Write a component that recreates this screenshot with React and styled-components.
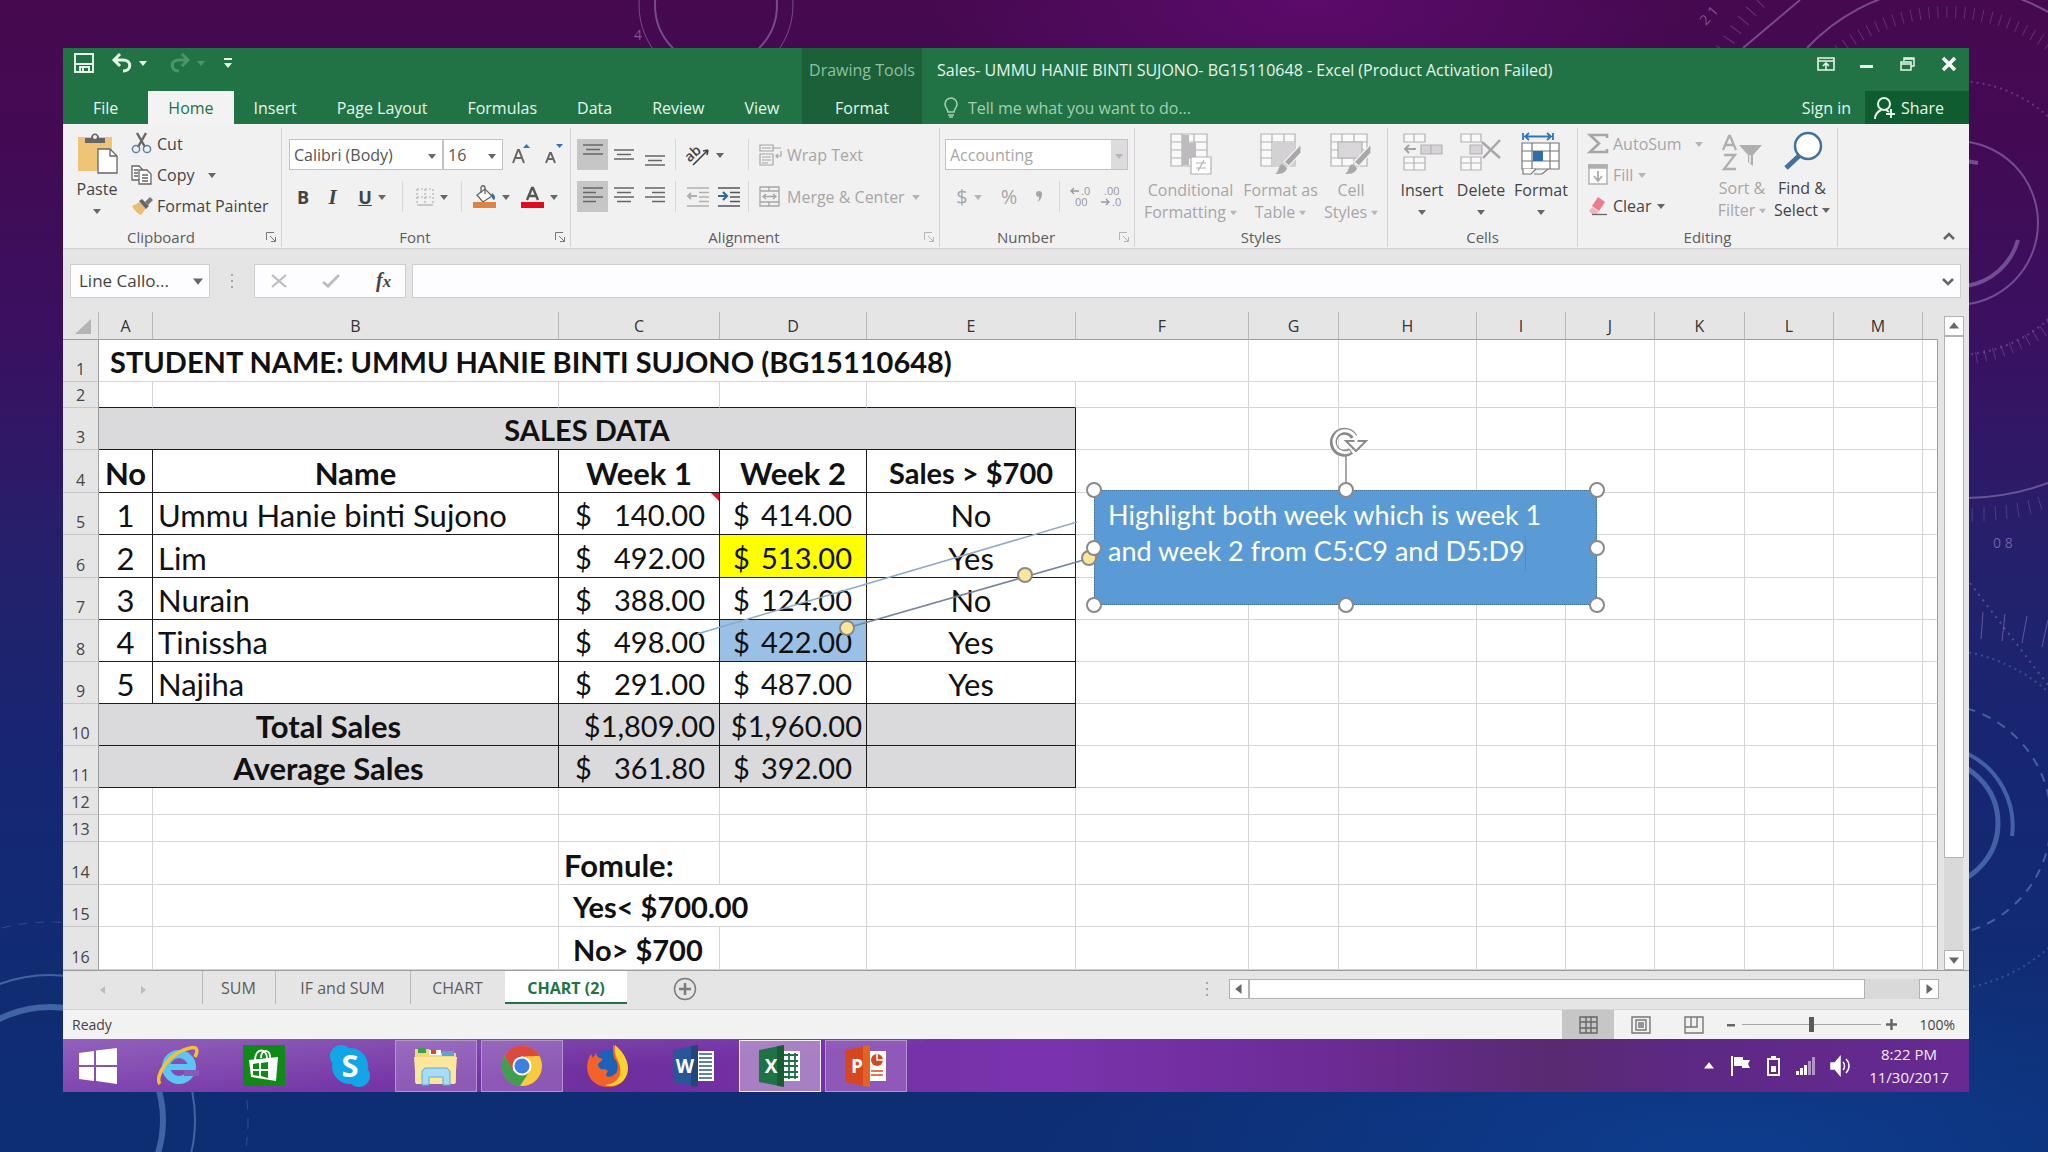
import React from "react";
import styled, { createGlobalStyle, css } from "styled-components";

const GlobalStyle = createGlobalStyle`
  * {
    box-sizing: border-box;
  }
  body {
    margin: 0;
    background: #123075;
  }
  button, input, select {
    font: inherit;
    color: inherit;
  }
  svg {
    display: block;
    flex: none;
    overflow: visible;
  }
`;

const Slide = styled.div`
  position: relative;
  min-height: 100vh;
  padding: 48px 79px 60px 63px;
  overflow: hidden;
  font-family: "Open Sans", "Noto Sans", sans-serif;
  font-size: 16px;
  line-height: 22px;
  color: #444;
  background:
    radial-gradient(ellipse 380px 160px at 64% 0%, rgba(110, 12, 130, 0.55), transparent),
    radial-gradient(ellipse 700px 220px at 84% 100%, rgba(14, 70, 160, 0.6), transparent),
    linear-gradient(#46094f, #430a54 12%, #391161 30%, #25206b 48%, #172672 65%, #102c72 85%, #0d2e72);
`;

const Backdrop = styled.svg`
  position: absolute;
  inset: 0;
  width: 100%;
  height: 100%;
`;

const Window = styled.main`
  position: relative;
  display: flex;
  flex-direction: column;
`;

/* ---------- title bar and tabs ---------- */

const TitleBar = styled.header`
  display: flex;
  height: 76px;
  background: #217346;
  color: #e6f6ea;
`;

const TitleLeft = styled.div`
  display: flex;
  flex-direction: column;
  justify-content: space-between;
  width: 739px;
`;

const QuickAccess = styled.div`
  display: flex;
  align-items: center;
  gap: 8px;
  height: 30px;
  padding-left: 9px;
`;

const IconButton = styled.button`
  display: flex;
  align-items: center;
  justify-content: center;
  gap: 6px;
  width: ${(p) => p.$w || 31}px;
  height: ${(p) => p.$h || 31}px;
  padding: 0;
  border: 0;
  background: ${(p) => (p.$on ? "#c6c6c6" : "transparent")};
  color: ${(p) => (p.$dim ? "#a6a6a6" : "inherit")};
  font-size: ${(p) => p.$size || 16}px;
`;

const Tabs = styled.nav`
  display: flex;
`;

const Tab = styled.button`
  height: 33px;
  padding: 0 ${(p) => p.$pad || 20}px;
  border: 0;
  background: ${(p) => (p.$active ? "#f3f3f3" : "transparent")};
  color: ${(p) => (p.$active ? "#217346" : "#e6f6ea")};
  white-space: nowrap;
`;

const ContextTab = styled.div`
  display: flex;
  flex-direction: column;
  justify-content: space-between;
  align-items: center;
  width: 120px;
  padding-top: 11px;
  background: #1c6039;
  color: #8fc0a0;
  white-space: nowrap;
`;

const TitleRight = styled.div`
  flex: 1;
  display: flex;
  flex-direction: column;
  justify-content: space-between;
`;

const TitleRow = styled.div`
  display: flex;
  justify-content: space-between;
  align-items: ${(p) => (p.$top ? "flex-start" : "center")};
  padding-left: ${(p) => p.$left || 15}px;
`;

const DocTitle = styled.h1`
  margin: 11px 0 0;
  font-size: 16px;
  font-weight: 400;
  line-height: 22px;
`;

const WindowButtons = styled.div`
  display: flex;
  gap: 10px;
  padding-right: 5px;
`;

const TellMe = styled.label`
  display: flex;
  align-items: center;
  gap: 10px;
  color: #a3cfb0;
  input {
    width: 300px;
    padding: 0;
    border: 0;
    background: none;
  }
  input::placeholder {
    color: #a3cfb0;
    opacity: 1;
  }
`;

const Account = styled.div`
  display: flex;
  align-items: center;
`;

const SignIn = styled.a`
  padding: 0 14px;
  color: #e6f6ea;
  text-decoration: none;
`;

const Share = styled.button`
  display: flex;
  align-items: center;
  gap: 5px;
  width: 104px;
  height: 33px;
  padding: 0 9px;
  border: 0;
  background: #0e5c2f;
`;

/* ---------- ribbon ---------- */

const Ribbon = styled.section`
  display: flex;
  height: 125px;
  padding: 4px 0 1px;
  background: #f2f1f2;
  border-bottom: 1px solid #d2d0d2;
`;

const GroupBox = styled.section`
  display: flex;
  flex-direction: column;
  justify-content: space-between;
  width: ${(p) => p.$w}px;
  border-right: 1px solid #d4d2d4;
`;

const GroupBody = styled.div`
  display: flex;
  padding-left: ${(p) => p.$left || 0}px;
`;

const GroupFoot = styled.footer`
  display: flex;
  align-items: center;
  justify-content: center;
  height: 20px;
  padding: 0 5px;
  font-size: 15px;
  color: #5c5c5c;
  span {
    flex: 1;
    text-align: center;
    padding-right: ${(p) => (p.$launcher ? 12 : 0)}px;
  }
`;

const Rows = styled.div`
  display: flex;
  flex-direction: column;
  gap: ${(p) => p.$gap || 0}px;
  padding-top: ${(p) => p.$top || 0}px;
  padding-left: ${(p) => p.$left || 0}px;
`;

const Row = styled.div`
  display: flex;
  align-items: center;
  height: 31px;
`;

const Separator = styled.i`
  width: 1px;
  height: 31px;
  margin: 0 ${(p) => p.$r || 8}px 0 ${(p) => p.$l || 5}px;
  background: #d8d6d8;
`;

const TextButton = styled.button`
  display: flex;
  align-items: center;
  gap: ${(p) => p.$gap || 5}px;
  height: 31px;
  padding: 0;
  border: 0;
  background: none;
  color: ${(p) => (p.$dim ? "#a6a6a6" : "#444")};
  white-space: nowrap;
`;

const BigButton = styled.button`
  display: flex;
  flex-direction: column;
  align-items: center;
  width: ${(p) => p.$w}px;
  padding: 5px 0 0;
  border: 0;
  background: none;
  color: ${(p) => (p.$dim ? "#a6a6a6" : "#444")};
  line-height: 22px;
  white-space: nowrap;
  svg {
    margin-bottom: 4px;
  }
`;

const ArrowLine = styled.span`
  display: flex;
  align-items: center;
  gap: 4px;
  height: 22px;
  svg {
    margin: 0;
  }
`;

const Combo = styled.div`
  position: relative;
  width: ${(p) => p.$w}px;
  height: 31px;
  select {
    width: 100%;
    height: 100%;
    padding: 0 4px;
    border: 1px solid #c3c1c3;
    border-radius: 0;
    background: #fff;
    appearance: none;
    color: ${(p) => (p.$dim ? "#a6a6a6" : "#555")};
    opacity: 1;
  }
  svg {
    position: absolute;
    right: 7px;
    top: 13px;
    pointer-events: none;
  }
`;

const DimCombo = styled(Combo)`
  select {
    border-right: 17px solid #dddbdd;
    outline: 1px solid #c3c1c3;
    outline-offset: -1px;
  }
  svg {
    right: 5px;
  }
`;

const Letter = styled.span`
  font-size: ${(p) => p.$size || 18}px;
  font-weight: ${(p) => (p.$bold ? 700 : 400)};
  font-style: ${(p) => (p.$italic ? "italic" : "normal")};
  font-family: ${(p) => (p.$serif ? '"Liberation Serif", serif' : "inherit")};
  text-decoration: ${(p) => (p.$underline ? "underline" : "none")};
`;

const CollapseSlot = styled.div`
  flex: 1;
  display: flex;
  align-items: flex-end;
  justify-content: flex-end;
  padding-right: 5px;
`;

/* ---------- formula bar ---------- */

const FormulaBar = styled.section`
  display: flex;
  height: 63px;
  padding: 15px 8px 14px 7px;
  background: #e6e5e6;
`;

const FieldBox = styled.div`
  display: flex;
  align-items: center;
  justify-content: space-between;
  width: ${(p) => (p.$w ? p.$w + "px" : "auto")};
  flex: ${(p) => (p.$w ? "none" : 1)};
  padding: 0 6px 0 8px;
  border: 1px solid #cfcdcf;
  background: #fdfcfe;
  input {
    flex: 1;
    min-width: 0;
    padding: 0;
    border: 0;
    background: none;
    font-size: 17px;
  }
`;

const Dots = styled.span`
  width: ${(p) => p.$w}px;
  display: flex;
  flex-direction: column;
  align-items: center;
  justify-content: center;
  gap: 4px;
  i {
    width: 2px;
    height: 2px;
    background: #a8a6a8;
  }
`;

/* ---------- sheet ---------- */

const SheetArea = styled.section`
  position: relative;
  display: flex;
  background: #e6e5e6;
`;

const Grid = styled.table`
  flex: 1;
  width: 0;
  table-layout: fixed;
  border-collapse: separate;
  border-spacing: 0;
`;

const ColHead = styled.th`
  height: 28px;
  padding: 0;
  border-right: 1px solid #b9b7b9;
  border-bottom: 1px solid #9d9b9d;
  background: #e6e5e6;
  font-weight: 400;
  color: #333;
  &:last-child {
    border-right: 0;
  }
`;

const RowHead = styled.th`
  height: ${(p) => p.$h}px;
  padding: 0 0 1px;
  border-right: 1px solid #9d9b9d;
  border-bottom: 1px solid #c8c6c8;
  background: #e6e5e6;
  font-weight: 400;
  line-height: 22px;
  vertical-align: bottom;
  color: #444;
`;

const boxed = css`
  border-right-color: #1d1b1f;
  border-bottom-color: #1d1b1f;
`;

const Cell = styled.td`
  position: relative;
  padding: 0 ${(p) => p.$padR ?? 5}px 2px ${(p) => p.$padL ?? 5}px;
  border-right: 1px solid #d6d3d9;
  border-bottom: 1px solid #d6d3d9;
  background: ${(p) => p.$fill || "#fff"};
  color: #111;
  font-family: Lato, Carlito, sans-serif;
  font-size: ${(p) => (p.$tight ? 29 : 31)}px;
  font-weight: ${(p) => (p.$bold ? 700 : 400)};
  line-height: 34px;
  text-align: ${(p) => p.$align || "left"};
  vertical-align: bottom;
  white-space: nowrap;
  ${(p) => p.$under && "border-bottom-color: #1d1b1f;"}
  ${(p) => p.$box && boxed}
  &:last-child {
    border-right-color: #9d9b9d;
  }
`;

const Money = styled.span`
  display: flex;
  justify-content: space-between;
`;

const NoteMark = styled.i`
  position: absolute;
  top: 0;
  right: 0;
  border-top: 8px solid #e3122d;
  border-left: 8px solid transparent;
`;

const VScroll = styled.div`
  display: flex;
  flex-direction: column;
  width: 31px;
  padding: 4px 6px 0;
`;

const ScrollButton = styled.button`
  display: flex;
  align-items: center;
  justify-content: center;
  width: 20px;
  height: 20px;
  padding: 0;
  border: 1px solid #b3b1b3;
  background: #fdfdfd;
`;

const VThumb = styled.div`
  height: 522px;
  width: 20px;
  border: 1px solid #b3b1b3;
  background: #fff;
`;

const ScrollTrack = styled.div`
  flex: 1;
  background: #dad9da;
`;

const Shapes = styled.svg`
  position: absolute;
  left: 0;
  top: 0;
  width: 1875px;
  height: 658px;
  pointer-events: none;
`;

const Callout = styled.div`
  position: absolute;
  left: 1031px;
  top: 178px;
  width: 503px;
  height: 115px;
  padding: 6px 13px;
  background: #5b9bd5;
  border: 1px dotted #41719c;
  color: #fff;
  font-family: Lato, Carlito, sans-serif;
  font-size: 27px;
  line-height: 36px;
  white-space: nowrap;
  p {
    margin: 0;
    height: 36px;
  }
`;

const Caret = styled.i`
  display: inline-block;
  width: 1px;
  height: 34px;
  background: #7d7f86;
  vertical-align: middle;
`;

/* ---------- sheet tabs, status bar ---------- */

const SheetBar = styled.nav`
  display: flex;
  height: 39px;
  padding-right: 30px;
  border-top: 1px solid #9d9b9d;
  background: #e6e5e6;
`;

const SheetNav = styled.div`
  display: flex;
  align-items: center;
  gap: 9px;
  width: 139px;
  padding-left: 24px;
`;

const SheetTab = styled.button`
  height: 33px;
  padding: 0;
  width: ${(p) => p.$w}px;
  border: 0;
  background: ${(p) => (p.$active ? "#fff" : "transparent")};
  color: ${(p) => (p.$active ? "#217346" : "#5c5c5c")};
  font-weight: ${(p) => (p.$active ? 700 : 400)};
  box-shadow: ${(p) => (p.$active ? "inset 0 -2px #217346" : "inset 1px 0 #b9b7b9")};
`;

const AddSheet = styled.button`
  display: flex;
  align-items: center;
  justify-content: center;
  width: 116px;
  height: 36px;
  padding: 0;
  border: 0;
  background: none;
`;

const HScroll = styled.div`
  display: flex;
  width: 733px;
  height: 20px;
  margin-top: 8px;
  margin-left: auto;
`;

const HThumb = styled.div`
  flex: 0 0 616px;
  border: 1px solid #b3b1b3;
  background: #fff;
`;

const StatusBar = styled.footer`
  display: flex;
  align-items: center;
  height: 30px;
  padding: 0 14px 0 9px;
  border-top: 1px solid #d2d0d2;
  background: #f2f2f2;
  font-size: 14px;
`;

const StatusText = styled.span`
  flex: 1;
`;

const Zoom = styled.input`
  appearance: none;
  width: 139px;
  height: 20px;
  margin: 0;
  background: linear-gradient(#a5a5a5, #a5a5a5) center / 100% 1px no-repeat;
  &::-webkit-slider-thumb {
    appearance: none;
    width: 5px;
    height: 15px;
    background: #5a5a5a;
  }
`;

const ZoomLabel = styled.output`
  width: 54px;
  text-align: right;
`;

/* ---------- taskbar ---------- */

const Taskbar = styled.footer`
  display: flex;
  align-items: center;
  height: 53px;
  background: linear-gradient(176deg, rgba(190, 160, 215, 0.35), transparent 60%) 0 0 / 860px 100% no-repeat,
    linear-gradient(90deg, #7c3fae, #6f2f9f 30%, #7a33ad 52%, #6c2b96 66%, #592a72 78%, #5e2885 86%, #672a92);
`;

const TaskItem = styled.button`
  display: flex;
  align-items: center;
  justify-content: center;
  width: ${(p) => p.$w || 82}px;
  height: 52px;
  margin-right: 4px;
  padding: 0;
  border: 1px solid ${(p) => (p.$active ? "#f1e9f6" : p.$open ? "#b493cf" : "transparent")};
  background: ${(p) => (p.$active ? "rgba(220, 205, 225, 0.5)" : p.$open ? "rgba(200, 170, 220, 0.32)" : "transparent")};
`;

const Tray = styled.div`
  display: flex;
  align-items: center;
  gap: 14px;
  margin-left: auto;
  padding-right: 17px;
`;

const Clock = styled.time`
  width: 86px;
  color: #f3ecf7;
  font-size: 15px;
  line-height: 23px;
  text-align: center;
`;

/* ---------- small drawings ---------- */

function Arrow({ dim, size = 8, dir = "down", color }) {
  const d = {
    down: "M0 2h8L4 7z",
    up: "M0 6h8L4 1z",
    left: "M6 0v8L1 4z",
    right: "M2 0v8l5-4z",
  }[dir];
  return (
    <svg width={size} height={size} viewBox="0 0 8 8" fill={color || (dim ? "#b5b5b5" : "#666")}>
      <path d={d} />
    </svg>
  );
}

function Launcher({ dim }) {
  return (
    <svg width="10" height="10" viewBox="0 0 10 10" fill="none" stroke={dim ? "#b5b5b5" : "#777"}>
      <path d="M.5 8V.5H8M4 4l5 5M9.500 5v4.500H5" />
    </svg>
  );
}

function Lines({ widths, top = 0, color = "#666" }) {
  return (
    <svg width="20" height="24" viewBox="0 0 20 24" stroke={color} strokeWidth="1.500">
      {widths.map(([x1, x2], i) => (
        <path key={i} d={`M${x1} ${top + i * 4.5}H${x2}`} />
      ))}
    </svg>
  );
}

function Scissors() {
  return (
    <svg width="21" height="21" viewBox="0 0 21 21" fill="none" strokeWidth="2">
      <path d="M6 0l8 14M15 0L7 14" stroke="#666" strokeWidth="2.400" />
      <circle cx="5" cy="16" r="3.600" stroke="#5d7fa3" strokeWidth="1.500" />
      <circle cx="16" cy="16" r="3.600" stroke="#5d7fa3" strokeWidth="1.500" />
    </svg>
  );
}

function CopyIcon() {
  return (
    <svg width="21" height="20" viewBox="0 0 21 20" fill="#fff" stroke="#666" strokeWidth="1.300">
      <path d="M1 1h7l3 3v11H1zM3 5h4M3 8h4M3 11h4" />
      <path d="M8 5h8l4 4v10H8zM11 10h6M11 13h6M11 16h6" />
    </svg>
  );
}

function Brush() {
  return (
    <svg width="22" height="18" viewBox="0 0 22 18">
      <path d="M1 9l8-4 6 6-5 7c-3-1-7-5-9-9z" fill="#efba74" />
      <path d="M8 4l3-2 7 7-3 3z" fill="#666" />
      <path d="M14 5l5-5 3 3-5 5z" fill="#777" />
    </svg>
  );
}

function PasteIcon() {
  return (
    <svg width="42" height="41" viewBox="0 0 42 41">
      <path d="M2 4h34v34H2z" fill="#f0c477" />
      <path d="M9 10V5h6c0-6 8-6 8 0h6v5z" fill="#666" />
      <circle cx="19" cy="4" r="2" fill="#f2f1f2" />
      <path d="M22 16h12l7 7v17H22z" fill="#fff" stroke="#666" strokeWidth="1.300" />
      <path d="M34 16v7h7" fill="none" stroke="#666" strokeWidth="1.300" />
    </svg>
  );
}

function BorderIcon() {
  return (
    <svg width="18" height="18" viewBox="0 0 18 18" fill="none" stroke="#b0b0b0" strokeWidth="1.200">
      <path d="M1 1h16v16M1 1v16M9 1v16M1 9h16" strokeDasharray="2 2" />
      <path d="M1 17h16" />
    </svg>
  );
}

function BucketIcon() {
  return (
    <svg width="23" height="24" viewBox="0 0 23 24">
      <path d="M4 10l8-6 7 7-9 6z" fill="#fff" stroke="#666" strokeWidth="1.300" />
      <path d="M8 8V3c0-3 4-3 4 0v6" fill="none" stroke="#666" strokeWidth="1.300" />
      <path d="M19 8c3 2 4 5 2 7-2-1-3-4-2-7z" fill="#3a6d9a" />
      <path d="M0 17h23v6H0z" fill="#df8344" />
    </svg>
  );
}

function FontColorIcon() {
  return (
    <svg width="23" height="24" viewBox="0 0 23 24">
      <path d="M6 15l5-12h1l5 12M8 11h7" fill="none" stroke="#555" strokeWidth="2.400" />
      <path d="M0 17h23v6H0z" fill="#e00b1c" />
    </svg>
  );
}

function OrientIcon() {
  return (
    <svg width="26" height="24" viewBox="0 0 26 24">
      <text x="1" y="16" fontSize="14" fontFamily="Open Sans" fontWeight="600" fill="#444" transform="rotate(-42 8 12)">ab</text>
      <path d="M9 22L24 7M24 7l-5 1M24 7l-1 5" fill="none" stroke="#444" strokeWidth="1.600" />
    </svg>
  );
}

function IndentIcon({ dim }) {
  const c = dim ? "#b0b0b0" : "#555";
  return (
    <svg width="24" height="20" viewBox="0 0 24 20" fill="none" stroke={c} strokeWidth="1.500">
      <path d="M1 1h22M13 5.500h10M13 10h10M13 14.500h10M1 19h22" />
      {dim ? (
        <path d="M11 9H2M5 6L2 9l3 3" strokeWidth="2" />
      ) : (
        <path d="M1 9h9M6 5l4 4-4 4" stroke="#2d6a94" strokeWidth="2.200" />
      )}
    </svg>
  );
}

function WrapIcon() {
  return (
    <svg width="23" height="22" viewBox="0 0 23 22" fill="none" stroke="#a6a6a6" strokeWidth="1.200">
      <path d="M1 1h13v6H1zM14 4h8M3 4h9M1 10h13v11H1zM3 13h9M3 16h9M3 19h6" />
      <path d="M22 7v5h-5M19 10l-2 2 2 2" />
    </svg>
  );
}

function MergeIcon() {
  return (
    <svg width="21" height="21" viewBox="0 0 21 21" fill="none" stroke="#a6a6a6" strokeWidth="1.300">
      <path d="M1 1h19v19H1zM1 5h19M1 16h19M10 1v4M10 16v4M4 10.500h13M7 8l-3 2.500L7 13M14 8l3 2.500L14 13" />
    </svg>
  );
}

function DecimalIcon({ more }) {
  return (
    <svg width="22" height="22" viewBox="0 0 22 22" fill="#999" fontSize="11" fontFamily="Open Sans">
      <text x={more ? 12 : 4} y="9">{more ? ".0" : ".00"}</text>
      <text x={more ? 6 : 12} y="20">{more ? "00" : ".0"}</text>
      <path d={more ? "M10 5H2M5 2L2 5l3 3" : "M1 16h8M6 13l3 3-3 3"} fill="none" stroke="#999" strokeWidth="1.300" />
    </svg>
  );
}

function SheetIcon({ children, w = 40, brush }) {
  return (
    <svg width="42" height="42" viewBox="0 0 42 42" fill="none" stroke="#b3b1b3" strokeWidth="1.200">
      <path d={`M1 1h${w - 4}v32H1zM1 9h${w - 4}M1 17h${w - 4}M1 25h${w - 4}M12 1v32M24 1v32`} fill="#f9f9f9" />
      {children}
      {brush && (
        <g stroke="none">
          <path d="M41 11v9L29 33l-5-4z" fill="#a9a7a9" stroke="#f2f1f2" />
          <path d="M22 31l5 4c-1 5-6 6-12 6 4-2 3-8 7-10z" fill="#a9a7a9" />
        </g>
      )}
    </svg>
  );
}

function InsertCells() {
  return (
    <svg width="42" height="42" viewBox="0 0 42 42" fill="#f8f8f8" stroke="#b3b1b3" strokeWidth="1.200">
      <path d="M3 1h21v8H3zM13 1v8M3 24h21v13H3zM13 24v13M3 30h21" />
      <path d="M20 12h21v9H20z" fill="#d5d3d5" />
      <path d="M30 12v9" />
      <path d="M15 16H4M8 12l-4 4 4 4" fill="none" stroke="#a3a1a3" strokeWidth="2" />
    </svg>
  );
}

function DeleteCells() {
  return (
    <svg width="42" height="42" viewBox="0 0 42 42" fill="#f8f8f8" stroke="#b3b1b3" strokeWidth="1.200">
      <path d="M1 1h20v8H1zM11 1v8M1 24h20v13H1zM11 24v13M1 30h20" />
      <path d="M10 12h12v9H10z" fill="#d5d3d5" />
      <path d="M22 9l18 16M40 7L23 25" fill="none" stroke="#a9a7a9" strokeWidth="2.500" />
    </svg>
  );
}

function FormatCells() {
  return (
    <svg width="42" height="42" viewBox="0 0 42 42" fill="none" stroke="#777" strokeWidth="1.200">
      <path d="M3 0v7M33 0v7M5 3.500h26M9 0L5 3.500 9 7M27 0l4 3.500L27 7" stroke="#2f78b7" strokeWidth="1.800" />
      <path d="M2 10h37v26H2zM2 18h37M2 28h37M12 10v26M30 10v26" fill="#fff" />
      <path d="M13 18h10v10H13z" fill="#2f6fae" stroke="none" />
      <path d="M3 36v5h8l5-5M14 41h8l6-5" fill="#fff" />
    </svg>
  );
}

function SortIcon() {
  return (
    <svg width="42" height="40" viewBox="0 0 42 40" fill="none" stroke="#b0aeb0" strokeWidth="2.300">
      <path d="M2 17L8 3h1l6 14M4 12h9M3 22h11L3 36h12" />
      <path d="M18 12h23l-9 10v11l-5-4v-7z" fill="#b0aeb0" stroke="none" />
      <path d="M29 22v8" stroke="#f2f1f2" strokeWidth="1.500" />
    </svg>
  );
}

function FindIcon() {
  return (
    <svg width="42" height="40" viewBox="0 0 42 40" fill="#fff" stroke="#41719f">
      <path d="M19 22L5 35" strokeWidth="5" />
      <circle cx="27" cy="13" r="13" strokeWidth="2.500" />
    </svg>
  );
}

function FillIcon() {
  return (
    <svg width="20" height="21" viewBox="0 0 20 21" fill="#fff" stroke="#b0aeb0" strokeWidth="1.400">
      <path d="M1 1h18v19H1z" />
      <path d="M1 1h18v3H1z" fill="#b0aeb0" />
      <path d="M10 7v9M6 12l4 5 4-5" fill="none" strokeWidth="2" />
    </svg>
  );
}

function EraserIcon() {
  return (
    <svg width="20" height="20" viewBox="0 0 20 20">
      <path d="M10 1l7 5-6 9-7-5z" fill="#ee7c8b" />
      <path d="M4 11l6 4-1 3H4l-3-3z" fill="#f6b3bb" />
      <path d="M4 18.500h15" stroke="#666" strokeWidth="1.300" />
    </svg>
  );
}

function OfficeLogo({ letter, color, dark, children }) {
  return (
    <svg width="42" height="42" viewBox="0 0 42 42">
      <path d="M24 6h17v30H24z" fill="#fff" />
      {children}
      <path d="M0 5l25-5v42L0 37z" fill={color} />
      <path d="M25 0v42l-7-1V1z" fill={dark} opacity="0.3" />
      <text x="12" y="28" fontSize="19" fontWeight="700" fontFamily="Open Sans" fill="#fff" textAnchor="middle">{letter}</text>
    </svg>
  );
}

const Start = () => (
  <svg width="38" height="36" viewBox="0 0 38 36" fill="#fff">
    <path d="M0 5l15-2v14H0zM17 2.500L38 0v17H17zM0 19h15v14L0 31zM17 19h21v17l-21-3z" />
  </svg>
);

const Explorer = () => (
  <svg width="42" height="42" viewBox="0 0 42 42">
    <circle cx="22" cy="22" r="13" fill="none" stroke="#5cc5f2" strokeWidth="8" />
    <path d="M10 22h27" stroke="#5cc5f2" strokeWidth="6" />
    <path d="M27 25h15v6H27z" fill="#8a5bb5" />
    <path d="M3 39C-3 32 12 7 33 3c8-2 8 3 5 9" fill="none" stroke="#f2c232" strokeWidth="3.500" />
  </svg>
);

const Store = () => (
  <svg width="42" height="41" viewBox="0 0 42 41">
    <path d="M0 0h42v41H0z" fill="#0f8a16" />
    <path d="M6 15l29-3-2 24-25-4z" fill="#fff" />
    <path d="M12 15c0-12 12-13 12-1M18 13c0-10 10-9 9 0" fill="none" stroke="#fff" strokeWidth="1.800" />
    <path d="M10 19l6-1v6h-6zM18 18l7-1v7h-7zM10 26h6v5l-6-1zM18 26h7v7l-7-2z" fill="#0f8a16" />
  </svg>
);

const Skype = () => (
  <svg width="42" height="42" viewBox="0 0 42 42" fill="#12a5e8">
    <circle cx="21" cy="21" r="18" />
    <circle cx="12" cy="11" r="11" />
    <circle cx="30" cy="31" r="11" />
    <text x="21" y="32" fontSize="31" fontWeight="700" fontFamily="Open Sans" fill="#fff" textAnchor="middle">S</text>
  </svg>
);

const Folder = () => (
  <svg width="46" height="42" viewBox="0 0 46 42">
    <path d="M2 4h14l3 4h24v30H2z" fill="#f1d97a" />
    <path d="M5 3h8v5H5z" fill="#3f9b4d" />
    <path d="M16 5h12v5H16z" fill="#fff" />
    <path d="M18 5h5v4h-5z" fill="#d24a3a" />
    <path d="M29 6h12v5H29z" fill="#5d9fdc" />
    <path d="M1 12h43l-2 27H3z" fill="#fae79b" />
    <path d="M9 40V26l3-3h22l3 3v14h-7v-8H16v8z" fill="#a7dcf3" stroke="#62acd4" />
  </svg>
);

const Chrome = () => (
  <svg width="42" height="42" viewBox="0 0 42 42">
    <circle cx="21" cy="21" r="20" fill="#f7cb3d" />
    <path d="M3.500 11A20 20 0 0 1 38.500 11L21 11.500 12 26z" fill="#dc4a3d" />
    <path d="M3.500 11A20 20 0 0 0 19 41l9-14-9 3-7-5z" fill="#3f9e4f" />
    <circle cx="21" cy="21" r="9.500" fill="#fff" />
    <circle cx="21" cy="21" r="7.500" fill="#3f7fe0" />
  </svg>
);

const Firefox = () => (
  <svg width="42" height="42" viewBox="0 0 42 42">
    <circle cx="22" cy="20" r="15" fill="#1d61b8" />
    <path d="M27 0c2 4 3 5 5 8 12 11 11 32-9 34C2 43-5 23 4 9l2 4 3-5c1 4 3 5 7 6l-5 5c0 4 3 6 7 5l3 2c-4 5-1 7 4 5 8-3 7-13 2-18-1-5-1-9-1-13z" fill="#f2622a" />
    <path d="M28 0c12 10 18 25 8 36-5 5-13 6-18 4 11-1 17-8 15-18-1-7-7-12-5-22z" fill="#fcd02e" />
  </svg>
);

/* ---------- sheet data ---------- */

const GREY = "#dad9db";
const columns = [
  ["A", 54], ["B", 406], ["C", 161], ["D", 147], ["E", 209], ["F", 173], ["G", 90],
  ["H", 138], ["I", 89], ["J", 89], ["K", 90], ["L", 89], ["M", 89], ["", 0],
];

const head = (text) => ({ text, bold: true, box: true, align: "center", padL: 0, padR: 0 });
const person = (no, name, week1, week2, passed, fill, note) => [
  { text: no, box: true, align: "center" },
  { text: name, box: true },
  { money: week1, box: true, padL: 16, padR: 14, note },
  { money: week2, box: true, padL: 13, padR: 14, fill },
  { text: passed, box: true, align: "center" },
];

const rows = [
  { h: 42, cells: [{ text: "STUDENT NAME: UMMU HANIE BINTI SUJONO (BG15110648)", bold: true, tight: true, span: 6, padL: 11 }] },
  { h: 26, cells: Array(5).fill({ under: true }) },
  { h: 42, cells: [{ ...head("SALES DATA"), tight: true, span: 5, fill: GREY }] },
  { h: 43, cells: [head("No"), head("Name"), head("Week 1"), head("Week 2"), { ...head("Sales > $700"), tight: true }] },
  { h: 42, cells: person("1", "Ummu Hanie binti Sujono", "140.00", "414.00", "No", undefined, true) },
  { h: 43, cells: person("2", "Lim", "492.00", "513.00", "Yes", "#ffff00") },
  { h: 42, cells: person("3", "Nurain", "388.00", "124.00", "No") },
  { h: 42, cells: person("4", "Tinissha", "498.00", "422.00", "Yes", "#9bc0e6") },
  { h: 42, cells: person("5", "Najiha", "291.00", "487.00", "Yes") },
  {
    h: 42,
    cells: [
      { ...head("Total Sales"), span: 2, fill: GREY },
      { text: "$1,809.00", tight: true, box: true, fill: GREY, align: "right", padR: 4 },
      { text: "$1,960.00", tight: true, box: true, fill: GREY, align: "right", padR: 4 },
      { box: true, fill: GREY },
    ],
  },
  {
    h: 42,
    cells: [
      { ...head("Average Sales"), span: 2, fill: GREY },
      { money: "361.80", box: true, fill: GREY, padL: 16, padR: 14 },
      { money: "392.00", box: true, fill: GREY, padL: 13, padR: 14 },
      { box: true, fill: GREY },
    ],
  },
  { h: 27, cells: [] },
  { h: 27, cells: [] },
  { h: 43, cells: [{}, {}, { text: "Fomule:", bold: true }] },
  { h: 42, cells: [{}, {}, { text: "Yes< $700.00", bold: true, tight: true, span: 2, padL: 14 }] },
  { h: 43, cells: [{}, {}, { text: "No> $700", bold: true, tight: true, padL: 14 }] },
];

function SheetRow({ row, number }) {
  const used = row.cells.reduce((sum, c) => sum + (c.span || 1), 0);
  const cells = row.cells.concat(Array(columns.length - used).fill({}));
  return (
    <tr>
      <RowHead scope="row" $h={row.h}>{number}</RowHead>
      {cells.map((c, i) => (
        <Cell
          key={i}
          colSpan={c.span}
          $align={c.align}
          $bold={c.bold}
          $tight={c.tight || c.money}
          $box={c.box}
          $under={c.under}
          $fill={c.fill}
          $padL={c.padL}
          $padR={c.padR}
        >
          {c.money ? <Money><span>$</span><span>{c.money}</span></Money> : c.text}
          {c.note && <NoteMark />}
        </Cell>
      ))}
    </tr>
  );
}

function Group({ name, w, left, launcher, children }) {
  return (
    <GroupBox $w={w} aria-label={name}>
      <GroupBody $left={left}>{children}</GroupBody>
      <GroupFoot $launcher={launcher}>
        <span>{name}</span>
        {launcher && <Launcher dim={launcher === "dim"} />}
      </GroupFoot>
    </GroupBox>
  );
}

function SlideBackdrop() {
  return (
    <Backdrop viewBox="0 0 2048 1152" preserveAspectRatio="xMidYMid slice" fill="none" stroke="#a58cc8" strokeOpacity="0.5">
      <circle cx="716" cy="5" r="61" strokeWidth="2" />
      <circle cx="716" cy="5" r="77" />
      <path d="M1807 48A197 197 0 0 1 2048 12" strokeWidth="2" />
      <path d="M1743 48L1800 0" strokeWidth="2" />
      <circle cx="1947" cy="186" r="174" strokeWidth="12" strokeDasharray="1 8" strokeOpacity="0.3" />
      <path d="M1722 50A268 268 0 0 1 1767 -5" strokeWidth="14" strokeDasharray="1 11" strokeOpacity="0.35" />
      <circle cx="1956" cy="223" r="82" strokeWidth="2" />
      <path d="M2018 240A64 64 0 0 1 1966 286M1966 161l12 2" strokeWidth="4" />
      <circle cx="1956" cy="218" r="137" strokeWidth="2" strokeDasharray="2 4" strokeOpacity="0.35" />
      <path d="M1968 498Q2010 497 2048 483" strokeWidth="2" />
      <path d="M1972 508v14M1984 507v14M1995 506l1 14M2006 505l1 14M2017 503l2 14M2028 500l3 14M2038 497l4 13" strokeOpacity="0.3" />
      <path d="M1983 612l-2 27M2005 614l-3 27M2027 616l-5 27M2048 620l-6 27" strokeOpacity="0.5" />
      <path d="M1970 583L2048 685" strokeWidth="2" strokeDasharray="2 5" strokeOpacity="0.4" />
      <g stroke="#6f9bd8">
        <circle cx="1935" cy="823" r="63" strokeWidth="5" />
        <path d="M1968 754A80 80 0 0 1 2012 836" strokeWidth="4" />
        <circle cx="1935" cy="820" r="116" strokeWidth="2" strokeDasharray="9 8" />
        <circle cx="1935" cy="820" r="171" strokeWidth="2" strokeDasharray="2 4" strokeOpacity="0.35" />
        <circle cx="50" cy="1120" r="145" strokeWidth="2" />
        <circle cx="50" cy="1120" r="113" strokeWidth="6" />
        <circle cx="50" cy="1120" r="198" strokeDasharray="9 8" strokeOpacity="0.3" />
      </g>
      <g stroke="none" fill="#a58cc8" fillOpacity="0.6" fontFamily="Open Sans" fontSize="14">
        <text x="1706" y="26" transform="rotate(-48 1706 26)">2 1</text>
        <text x="1993" y="548">0 8</text>
        <text x="634" y="40">4</text>
      </g>
    </Backdrop>
  );
}

function CalloutShapes() {
  const handles = [[1031, 178], [1283, 178], [1534, 178], [1031, 236], [1534, 236], [1031, 293], [1283, 293], [1534, 293]];
  const adjusts = [[784, 316], [962, 263], [1026, 246]];
  return (
    <Shapes viewBox="0 0 1875 658" fill="none">
      <path d="M634 322L1014 210" stroke="#8fa9c8" strokeWidth="1.500" />
      <path d="M784 316L1031 245" stroke="#75839f" strokeWidth="1.800" />
      <path d="M1283 144v30" stroke="#8b898b" strokeWidth="1.500" />
      <path d="M1291 125A11 11 0 1 0 1288 139" stroke="#8b898b" strokeWidth="7" />
      <path d="M1283 129h20l-10 10z" fill="#fff" stroke="#8b898b" strokeWidth="2" />
      <path d="M1293 131A11 11 0 1 0 1287 139.500" stroke="#fff" strokeWidth="3" />
      {adjusts.map(([x, y]) => (
        <circle key={x} cx={x} cy={y} r="7" fill="#fbe79a" stroke="#8b898b" strokeWidth="2" />
      ))}
      {handles.map(([x, y]) => (
        <circle key={x + "-" + y} cx={x} cy={y} r="7" fill="#fff" stroke="#8b898b" strokeWidth="2" />
      ))}
    </Shapes>
  );
}

function App() {
  return (
    <Slide>
      <GlobalStyle />
      <SlideBackdrop />
      <Window>
        <TitleBar>
          <TitleLeft>
            <QuickAccess>
              <IconButton $w={24} aria-label="Save">
                <svg width="20" height="20" viewBox="0 0 20 20" fill="none" stroke="#e6f6ea" strokeWidth="2">
                  <path d="M1 1h18v18H1zM2 11h16M6 19v-5h9v5M9 15v4" />
                </svg>
              </IconButton>
              <IconButton $w={50} aria-label="Undo">
                <svg width="22" height="20" viewBox="0 0 22 20" fill="none" stroke="#e6f6ea" strokeWidth="3">
                  <path d="M3 7h9c9 0 9 11 0 11M9 1L3 7l6 6" />
                </svg>
                <Arrow color="#e6f6ea" />
              </IconButton>
              <IconButton $w={50} aria-label="Redo">
                <svg width="22" height="20" viewBox="0 0 22 20" fill="none" stroke="#4d9468" strokeWidth="3">
                  <path d="M19 7h-9c-9 0-9 11 0 11M13 1l6 6-6 6" />
                </svg>
                <Arrow color="#4d9468" />
              </IconButton>
              <IconButton $w={16} aria-label="Customize toolbar">
                <svg width="8" height="11" viewBox="0 0 8 11" fill="#e6f6ea">
                  <path d="M0 0h8v2H0zM0 5h8l-4 5z" />
                </svg>
              </IconButton>
            </QuickAccess>
            <Tabs>
              <Tab $pad={30}>File</Tab>
              <Tab $active>Home</Tab>
              {["Insert", "Page Layout", "Formulas", "Data", "Review", "View"].map((t) => (
                <Tab key={t}>{t}</Tab>
              ))}
            </Tabs>
          </TitleLeft>
          <ContextTab>
            Drawing Tools
            <Tab>Format</Tab>
          </ContextTab>
          <TitleRight>
            <TitleRow $top>
              <DocTitle>Sales- UMMU HANIE BINTI SUJONO- BG15110648 - Excel (Product Activation Failed)</DocTitle>
              <WindowButtons>
                <IconButton aria-label="Ribbon display options">
                  <svg width="18" height="14" viewBox="0 0 18 14" fill="none" stroke="#e6f6ea" strokeWidth="1.600">
                    <path d="M1 1h16v12H1zM1 4h16M9 13V6M6 9l3-3 3 3" />
                  </svg>
                </IconButton>
                <IconButton aria-label="Minimize">
                  <svg width="13" height="14" viewBox="0 0 13 14" fill="#e6f6ea"><path d="M0 8h13v3H0z" /></svg>
                </IconButton>
                <IconButton aria-label="Restore">
                  <svg width="15" height="14" viewBox="0 0 15 14" fill="none" stroke="#e6f6ea" strokeWidth="1.500">
                    <path d="M4 4V1h10v8h-3M1 5h10v8H1zM1 7h10M4 2h10" />
                  </svg>
                </IconButton>
                <IconButton aria-label="Close">
                  <svg width="14" height="14" viewBox="0 0 14 14" stroke="#fff" strokeWidth="3.500"><path d="M1 1l12 12M13 1L1 13" /></svg>
                </IconButton>
              </WindowButtons>
            </TitleRow>
            <TitleRow $left={22}>
              <TellMe>
                <svg width="14" height="20" viewBox="0 0 14 20" fill="none" stroke="#a3cfb0" strokeWidth="1.600">
                  <path d="M4 14c0-3-3-4-3-8a6 6 0 0 1 12 0c0 4-3 5-3 8zM4 17h6M5 19h4" />
                </svg>
                <input placeholder="Tell me what you want to do..." aria-label="Tell me what you want to do" />
              </TellMe>
              <Account>
                <SignIn href="#signin">Sign in</SignIn>
                <Share>
                  <svg width="22" height="22" viewBox="0 0 22 22" fill="none" stroke="#e6f6ea" strokeWidth="2">
                    <circle cx="10" cy="7" r="6" />
                    <path d="M1 22c0-5 2-7 6-9M12 13l3 2M17 12v9M12 17h9" />
                  </svg>
                  Share
                </Share>
              </Account>
            </TitleRow>
          </TitleRight>
        </TitleBar>

        <Ribbon>
          <Group name="Clipboard" w={219} left={6} launcher="on">
            <BigButton $w={56}>
              <PasteIcon />
              Paste
              <ArrowLine><Arrow /></ArrowLine>
            </BigButton>
            <Rows $left={6}>
              <TextButton><Scissors />Cut</TextButton>
              <TextButton><CopyIcon />Copy &nbsp; <Arrow /></TextButton>
              <TextButton $gap={4}><Brush />Format Painter</TextButton>
            </Rows>
          </Group>

          <Group name="Font" w={289} left={7} launcher="on">
            <Rows $top={11} $gap={11}>
              <Row>
                <Combo $w={154}>
                  <select aria-label="Font name"><option>Calibri (Body)</option></select>
                  <Arrow />
                </Combo>
                <Combo $w={60}>
                  <select aria-label="Font size"><option>16</option></select>
                  <Arrow />
                </Combo>
                <IconButton $w={36} aria-label="Increase font size">
                  <svg width="20" height="22" viewBox="0 0 20 22" fill="none" stroke="#666" strokeWidth="2">
                    <path d="M2 19L7 6h1l5 13M4 14h7" /><path d="M12 4h7l-3.500-4z" fill="#2f78b7" stroke="none" />
                  </svg>
                </IconButton>
                <IconButton $w={28} aria-label="Decrease font size">
                  <svg width="20" height="22" viewBox="0 0 20 22" fill="none" stroke="#666" strokeWidth="2">
                    <path d="M3 19l4-10h1l4 10M4 15h7" /><path d="M13 0h7l-3.500 4z" fill="#2f78b7" stroke="none" />
                  </svg>
                </IconButton>
              </Row>
              <Row>
                <IconButton $w={28} aria-label="Bold"><Letter $bold>B</Letter></IconButton>
                <IconButton $w={31} aria-label="Italic"><Letter $bold $italic $serif $size={21}>I</Letter></IconButton>
                <IconButton $w={48} aria-label="Underline"><Letter $bold $underline>U</Letter><Arrow /></IconButton>
                <Separator $l={6} $r={4} />
                <IconButton $w={50} aria-label="Borders"><BorderIcon /><Arrow /></IconButton>
                <Separator $l={4} $r={4} />
                <IconButton $w={50} aria-label="Fill color"><BucketIcon /><Arrow /></IconButton>
                <IconButton $w={46} aria-label="Font color"><FontColorIcon /><Arrow /></IconButton>
              </Row>
            </Rows>
          </Group>

          <Group name="Alignment" w={369} left={6} launcher="dim">
            <Rows $top={11} $gap={11}>
              <Row>
                <IconButton $on aria-label="Top align"><Lines top={2} widths={[[0, 20], [3, 17], [0, 20]]} /></IconButton>
                <IconButton aria-label="Middle align"><Lines top={7} widths={[[0, 20], [3, 17], [0, 20]]} /></IconButton>
                <IconButton aria-label="Bottom align"><Lines top={13} widths={[[0, 20], [3, 17], [0, 20]]} /></IconButton>
                <Separator />
                <IconButton $w={40} aria-label="Orientation"><OrientIcon /><Arrow /></IconButton>
                <Separator $l={24} $r={10} />
                <TextButton $dim><WrapIcon />Wrap Text</TextButton>
              </Row>
              <Row>
                <IconButton $on aria-label="Align left"><Lines top={3} widths={[[0, 20], [0, 13], [0, 20], [0, 13]]} /></IconButton>
                <IconButton aria-label="Center"><Lines top={3} widths={[[0, 20], [3, 17], [0, 20], [3, 17]]} /></IconButton>
                <IconButton aria-label="Align right"><Lines top={3} widths={[[0, 20], [7, 20], [0, 20], [7, 20]]} /></IconButton>
                <Separator $r={6} />
                <IconButton $dim aria-label="Decrease indent"><IndentIcon dim /></IconButton>
                <IconButton aria-label="Increase indent"><IndentIcon /></IconButton>
                <Separator $l={4} $r={10} />
                <TextButton $dim $gap={7}><MergeIcon />Merge &amp; Center <Arrow dim /></TextButton>
              </Row>
            </Rows>
          </Group>

          <Group name="Number" w={195} left={5} launcher="dim">
            <Rows $top={11} $gap={11}>
              <DimCombo $w={183} $dim>
                <select aria-label="Number format" disabled><option>Accounting</option></select>
                <Arrow dim />
              </DimCombo>
              <Row>
                <IconButton $w={48} $dim $size={20} aria-label="Accounting format">$ <Arrow dim /></IconButton>
                <IconButton $w={32} $dim $size={20}>%</IconButton>
                <IconButton $w={28} aria-label="Comma style">
                  <svg width="8" height="12" viewBox="0 0 8 12" fill="#a6a6a6"><path d="M1 3a3 3 0 1 1 6 0c0 4-2 7-5 8 2-2 2-3 2-5a3 3 0 0 1-3-3z" /></svg>
                </IconButton>
                <Separator $l={6} $r={5} />
                <IconButton $w={30} aria-label="Increase decimal"><DecimalIcon more /></IconButton>
                <IconButton $w={32} aria-label="Decrease decimal"><DecimalIcon /></IconButton>
              </Row>
            </Rows>
          </Group>

          <Group name="Styles" w={253} left={6}>
            <BigButton $w={99} $dim>
              <SheetIcon>
                <path d="M12 2h7v30h-7zM19 10h7v15h-7z" fill="#bdbbbd" stroke="none" />
                <path d="M21 24h20v17H21zM26 30h10M26 35h10M34 27l-6 11" fill="#fff" />
              </SheetIcon>
              Conditional
              <ArrowLine>Formatting <Arrow dim size={7} /></ArrowLine>
            </BigButton>
            <BigButton $w={81} $dim>
              <SheetIcon w={38} brush>
                <path d="M12 9h23v24H12z" fill="#d3d1d3" stroke="none" />
              </SheetIcon>
              Format as
              <ArrowLine>Table <Arrow dim size={7} /></ArrowLine>
            </BigButton>
            <BigButton $w={60} $dim>
              <SheetIcon w={40} brush>
                <path d="M8 9h24v16H8z" fill="#d9d7d9" />
              </SheetIcon>
              Cell
              <ArrowLine>Styles <Arrow dim size={7} /></ArrowLine>
            </BigButton>
          </Group>

          <Group name="Cells" w={190} left={5}>
            <BigButton $w={58}><InsertCells />Insert<ArrowLine><Arrow /></ArrowLine></BigButton>
            <BigButton $w={60}><DeleteCells />Delete<ArrowLine><Arrow /></ArrowLine></BigButton>
            <BigButton $w={60}><FormatCells />Format<ArrowLine><Arrow /></ArrowLine></BigButton>
          </Group>

          <Group name="Editing" w={260} left={10}>
            <Rows>
              <TextButton $dim>
                <svg width="20" height="21" viewBox="0 0 20 21" fill="none" stroke="#a6a6a6" strokeWidth="2.600">
                  <path d="M19 5V2H2l9 8.500L2 19h17v-3" />
                </svg>
                AutoSum &nbsp; <Arrow dim />
              </TextButton>
              <TextButton $dim><FillIcon />Fill <Arrow dim /></TextButton>
              <TextButton><EraserIcon />Clear <Arrow /></TextButton>
            </Rows>
            <GroupBody $left={10}>
              <BigButton $w={58} $dim><SortIcon />Sort &amp;<ArrowLine>Filter <Arrow dim size={7} /></ArrowLine></BigButton>
              <BigButton $w={62}><FindIcon />Find &amp;<ArrowLine>Select <Arrow /></ArrowLine></BigButton>
            </GroupBody>
          </Group>
          <CollapseSlot>
            <IconButton $h={22} aria-label="Collapse ribbon">
              <svg width="14" height="10" viewBox="0 0 14 10" fill="none" stroke="#666" strokeWidth="2.500"><path d="M2 8l5-5 5 5" /></svg>
            </IconButton>
          </CollapseSlot>
        </Ribbon>

        <FormulaBar>
          <FieldBox $w={140}>
            <input aria-label="Name box" defaultValue="Line Callo..." />
            <Arrow size={10} />
          </FieldBox>
          <Dots $w={44}><i /><i /><i /></Dots>
          <FieldBox $w={152}>
            <IconButton aria-label="Cancel">
              <svg width="16" height="14" viewBox="0 0 16 14" stroke="#bdbbbd" strokeWidth="2.200"><path d="M1 1l14 12M15 1L1 13" /></svg>
            </IconButton>
            <IconButton aria-label="Enter">
              <svg width="18" height="14" viewBox="0 0 18 14" fill="none" stroke="#bdbbbd" strokeWidth="2.800"><path d="M1 8l5 4L17 1" /></svg>
            </IconButton>
            <IconButton aria-label="Insert function"><Letter $italic $serif $bold $size={20}>f<small>x</small></Letter></IconButton>
          </FieldBox>
          <Dots $w={6} />
          <FieldBox>
            <input aria-label="Formula" />
            <svg width="12" height="9" viewBox="0 0 12 9" fill="none" stroke="#666" strokeWidth="2.500"><path d="M1 2l5 5 5-5" /></svg>
          </FieldBox>
        </FormulaBar>

        <SheetArea>
          <Grid>
            <colgroup>
              <col width="36" />
              {columns.map(([name, width]) => <col key={name} width={width || undefined} />)}
            </colgroup>
            <thead>
              <tr>
                <ColHead>
                  <svg width="31" height="20" viewBox="0 0 31 20"><path d="M28 3v15H12z" fill="#b5b3b5" /></svg>
                </ColHead>
                {columns.map(([name]) => <ColHead key={name} scope="col">{name}</ColHead>)}
              </tr>
            </thead>
            <tbody>
              {rows.map((row, i) => <SheetRow key={i} row={row} number={i + 1} />)}
            </tbody>
          </Grid>
          <VScroll>
            <ScrollButton aria-label="Scroll up"><Arrow dir="up" size={10} /></ScrollButton>
            <VThumb />
            <ScrollTrack />
            <ScrollButton aria-label="Scroll down"><Arrow size={10} /></ScrollButton>
          </VScroll>
          <Callout>
            <p>Highlight both week which is week 1</p>
            <p>and week 2 from C5:C9 and D5:D9<Caret /></p>
          </Callout>
          <CalloutShapes />
        </SheetArea>

        <SheetBar>
          <SheetNav>
            <IconButton aria-label="Previous sheet"><Arrow dir="left" color="#bdbbbd" /></IconButton>
            <IconButton aria-label="Next sheet"><Arrow dir="right" color="#bdbbbd" /></IconButton>
          </SheetNav>
          <SheetTab $w={73}>SUM</SheetTab>
          <SheetTab $w={135}>IF and SUM</SheetTab>
          <SheetTab $w={95}>CHART</SheetTab>
          <SheetTab $w={122} $active>CHART (2)</SheetTab>
          <AddSheet aria-label="New sheet">
            <svg width="24" height="24" viewBox="0 0 24 24" fill="none" stroke="#7d7b7d" strokeWidth="1.500">
              <circle cx="12" cy="12" r="10.500" />
              <path d="M6 12h12M12 6v12" strokeWidth="2.500" />
            </svg>
          </AddSheet>
          <HScroll>
            <Dots $w={1}><i /><i /><i /></Dots>
            <Dots $w={22} />
            <ScrollButton aria-label="Scroll left"><Arrow dir="left" size={10} /></ScrollButton>
            <HThumb />
            <ScrollTrack />
            <ScrollButton aria-label="Scroll right"><Arrow dir="right" size={10} /></ScrollButton>
          </HScroll>
        </SheetBar>

        <StatusBar>
          <StatusText>Ready</StatusText>
          <IconButton $w={52} $h={29} $on aria-label="Normal view">
            <svg width="19" height="18" viewBox="0 0 19 18" fill="none" stroke="#666" strokeWidth="1.400"><path d="M1 1h17v16H1zM7 1v16M12 1v16M1 6h17M1 12h17" /></svg>
          </IconButton>
          <IconButton $w={54} $h={29} aria-label="Page layout view">
            <svg width="20" height="18" viewBox="0 0 20 18" fill="none" stroke="#777" strokeWidth="1.400"><path d="M1 1h18v16H1zM5 4h10v10H5zM7 7h6M7 9h6M7 11h6" /></svg>
          </IconButton>
          <IconButton $w={52} $h={29} aria-label="Page break preview">
            <svg width="20" height="18" viewBox="0 0 20 18" fill="none" stroke="#777" strokeWidth="1.400"><path d="M1 1h18v16H1zM1 11h12V1M7 1v10" /></svg>
          </IconButton>
          <IconButton $w={22} $h={29} aria-label="Zoom out">
            <svg width="8" height="10" viewBox="0 0 8 10" fill="#666"><path d="M0 4h8v2.500H0z" /></svg>
          </IconButton>
          <Zoom type="range" min="0" max="200" defaultValue="100" aria-label="Zoom" />
          <IconButton $w={20} $h={29} aria-label="Zoom in">
            <svg width="11" height="11" viewBox="0 0 11 11" stroke="#666" strokeWidth="2.500"><path d="M0 5.500h11M5.500 0v11" /></svg>
          </IconButton>
          <ZoomLabel>100%</ZoomLabel>
        </StatusBar>

        <Taskbar>
          <TaskItem $w={70} aria-label="Start"><Start /></TaskItem>
          <TaskItem aria-label="Internet Explorer"><Explorer /></TaskItem>
          <TaskItem aria-label="Store"><Store /></TaskItem>
          <TaskItem aria-label="Skype"><Skype /></TaskItem>
          <TaskItem $open aria-label="File Explorer"><Folder /></TaskItem>
          <TaskItem $open aria-label="Chrome"><Chrome /></TaskItem>
          <TaskItem aria-label="Firefox"><Firefox /></TaskItem>
          <TaskItem aria-label="Word">
            <OfficeLogo letter="W" color="#2a5699" dark="#123">
              <path d="M26 9h13M26 13h13M26 17h13M26 21h13M26 25h13M26 29h13M26 33h13" stroke="#2a5699" strokeWidth="1.500" />
            </OfficeLogo>
          </TaskItem>
          <TaskItem $active aria-label="Excel">
            <OfficeLogo letter="X" color="#1f7244" dark="#031">
              <path d="M24 10h15M24 16h15M24 21h15M24 27h15M24 32h15M30 8v26M36 8v26" stroke="#1f7244" strokeWidth="1.800" />
            </OfficeLogo>
          </TaskItem>
          <TaskItem $open aria-label="PowerPoint">
            <OfficeLogo letter="P" color="#d6471f" dark="#fa3">
              <circle cx="32" cy="15" r="6" fill="#d6471f" />
              <path d="M32 8v7h7" fill="none" stroke="#fff" strokeWidth="1.500" />
              <path d="M26 26h12M26 30h12" stroke="#d6471f" strokeWidth="1.500" />
            </OfficeLogo>
          </TaskItem>
          <Tray>
            <Arrow dir="up" size={10} color="#fff" />
            <svg width="22" height="20" viewBox="-2 0 22 20" fill="#fff"><path d="M1 0h2v20H1zM4 1h9v3h7l-2 4 2 4h-8v-2H4z" /></svg>
            <svg width="18" height="20" viewBox="12 0 18 20" fill="none" stroke="#fff" strokeWidth="2"><path d="M16 3h11v16H16zM19 1h5" /><path d="M19 10h5v6h-5z" fill="#fff" stroke="none" /></svg>
            <svg width="20" height="18" viewBox="0 0 20 18" fill="#fff"><path d="M0 14h3v4H0zM4 11h3v7H4zM8 8h3v10H8z" /><path d="M12 4h3v14h-3zM16 0h3v18h-3z" opacity="0.500" /></svg>
            <svg width="22" height="20" viewBox="0 0 22 20" fill="none" stroke="#fff" strokeWidth="1.500"><path d="M1 7h4l5-6v18l-5-6H1z" fill="#fff" /><path d="M13 6c2 2 2 6 0 8M16 3c4 4 4 10 0 14" /></svg>
            <Clock>8:22 PM<br />11/30/2017</Clock>
          </Tray>
        </Taskbar>
      </Window>
    </Slide>
  );
}

export default App;
